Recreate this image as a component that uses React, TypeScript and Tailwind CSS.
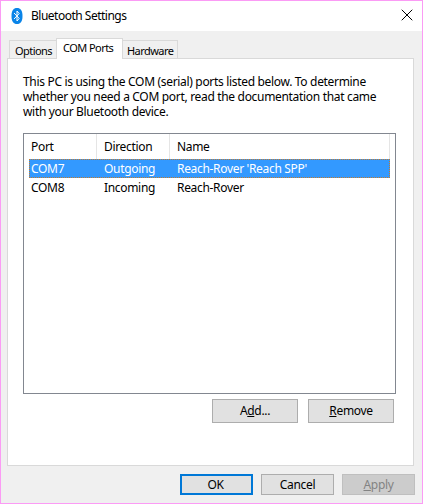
import React from 'react';
import { X } from 'lucide-react';

function BluetoothIcon() {
  return (
    <svg width="12" height="16" viewBox="0 0 12 16" className="shrink-0">
      <path d="M6 0C9.5 0 11.5 2.5 11.5 8S9.5 16 6 16 .5 13.5.5 8 2.5 0 6 0Z" fill="#0a84e8" />
      <path d="M3 5l5.2 5.4L6 13V3l2.2 2.6L3 11" fill="none" stroke="#fff" strokeWidth="1" />
    </svg>
  );
}

function Button({ children, className }: { children: React.ReactNode; className: string }) {
  return (
    <div className={`flex items-center justify-center border border-[#adadad] bg-[#e1e1e1] ${className}`}>
      {children}
    </div>
  );
}

const rows = [
  { port: 'COM7', direction: 'Outgoing', name: "Reach-Rover 'Reach SPP'", selected: true },
  { port: 'COM8', direction: 'Incoming', name: 'Reach-Rover', selected: false },
];

export default function App() {
  return (
    <div
      className="flex h-[504px] w-[423px] flex-col overflow-hidden border border-[#fb9bf5] bg-[#f0f0f0] text-[12px] tracking-[-0.32px] whitespace-nowrap text-black"
      style={{ fontFamily: '"Noto Sans", sans-serif' }}
    >
      {/* Title bar */}
      <div className="flex h-[30px] shrink-0 items-center bg-white pl-[10px] pr-[5px]">
        <BluetoothIcon />
        <span className="ml-[8px] flex-1 tracking-[-0.5px]">Bluetooth Settings</span>
        <X size={20} strokeWidth={1.2} className="mb-[2px]" />
      </div>

      {/* Tabs */}
      <div className="flex h-[27px] shrink-0 items-end pl-[8px] text-[11px] tracking-[-0.55px]">
        <div className="h-[18px] w-[47px] border border-r-0 border-b-0 border-[#d9d9d9] pl-[5px] pt-[1px] leading-[17px]">Options</div>
        <div className="relative z-10 -mb-px h-[21px] w-[67px] border border-b-0 border-[#d9d9d9] bg-white pl-[6px] leading-[17px]">COM Ports</div>
        <div className="-ml-px h-[18px] w-[56px] border border-b-0 border-[#d9d9d9] pl-[4px] pt-[1px] leading-[17px]">Hardware</div>
      </div>

      {/* Panel */}
      <div className="ml-[6px] flex h-[408px] w-[407px] shrink-0 flex-col border border-[#d9d9d9] bg-white pl-[15px] pr-[17px] pt-[15px]">
        <p className="h-[59px] leading-[15px]">
          This PC is using the COM (serial) ports listed below. To determine
          <br />
          whether you need a COM port, read the documentation that came
          <br />
          with your Bluetooth device.
        </p>

        {/* Port list */}
        <div className="flex h-[261px] flex-col border border-[#828790] bg-white">
          <div className="flex h-[25px] shrink-0 pr-[5px] leading-[25px]">
            <div className="w-[73px] border-r border-[#e5e5e5] pl-[7px]">Port</div>
            <div className="w-[73px] border-r border-[#e5e5e5] pl-[7px]">Direction</div>
            <div className="flex-1 border-r border-[#e5e5e5] pl-[7px]">Name</div>
          </div>
          {rows.map(row => (
            <div
              key={row.port}
              className={`ml-[5px] mr-[5px] flex h-[19px] items-center border ${row.selected ? 'border-dotted border-[#c07a30] bg-[#3399ff] text-white' : 'border-transparent'}`}
            >
              <div className="w-[73px] pl-[1px]">{row.port}</div>
              <div className="w-[73px] pl-[1px]">{row.direction}</div>
              <div className="flex-1 pl-[1px]">{row.name}</div>
            </div>
          ))}
        </div>

        <div className="mt-[5px] flex justify-end gap-[10px] pr-[2px]">
          <Button className="h-[24px] w-[86px]">
            <span>A<span className="underline">d</span>d...</span>
          </Button>
          <Button className="h-[24px] w-[86px]">
            <span><span className="underline">R</span>emove</span>
          </Button>
        </div>
      </div>

      {/* Dialog buttons */}
      <div className="mt-[8px] flex justify-end gap-[8px] pr-[7px]">
        <div className="flex h-[21px] w-[73px] items-center justify-center border-2 border-[#0078d7] bg-[#e1e1e1] pr-[2px]">OK</div>
        <Button className="h-[21px] w-[73px]">Cancel</Button>
        <div className="flex h-[21px] w-[73px] items-center justify-center border border-[#bfbfbf] bg-[#cccccc] text-[#838383]">
          <span><span className="underline">A</span>pply</span>
        </div>
      </div>
    </div>
  );
}
